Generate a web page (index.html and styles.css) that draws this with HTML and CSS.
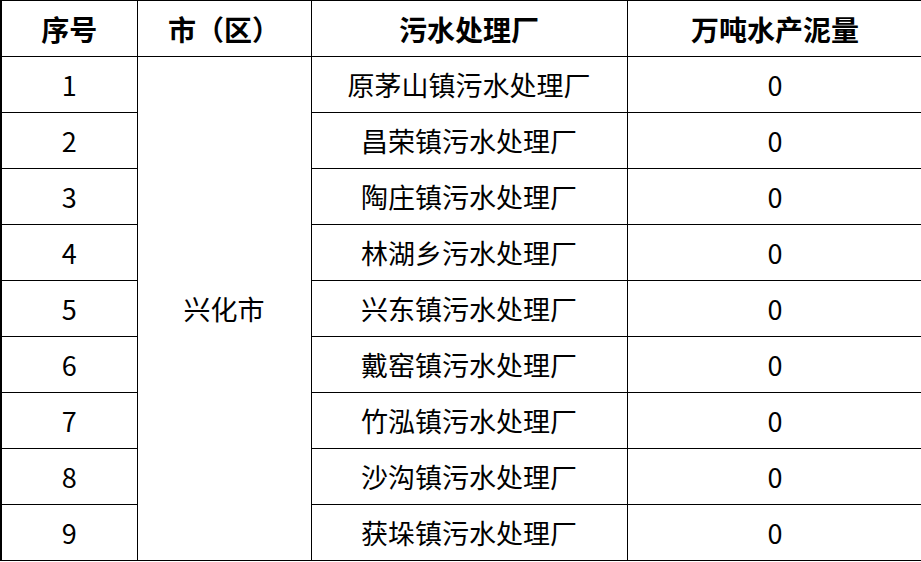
FILE: index.html
```html
<!DOCTYPE html>
<html lang="zh-CN">
<head>
<meta charset="utf-8">
<link rel="stylesheet" href="styles.css">
</head>
<body>
<table class="sludge">
  <colgroup>
    <col class="c1"><col class="c2"><col class="c3"><col class="c4">
  </colgroup>
  <thead>
    <tr><th>序号</th><th>市（区）</th><th>污水处理厂</th><th>万吨水产泥量</th></tr>
  </thead>
  <tbody>
    <tr><td>1</td><td rowspan="9">兴化市</td><td>原茅山镇污水处理厂</td><td>0</td></tr>
    <tr><td>2</td><td>昌荣镇污水处理厂</td><td>0</td></tr>
    <tr><td>3</td><td>陶庄镇污水处理厂</td><td>0</td></tr>
    <tr><td>4</td><td>林湖乡污水处理厂</td><td>0</td></tr>
    <tr><td>5</td><td>兴东镇污水处理厂</td><td>0</td></tr>
    <tr><td>6</td><td>戴窑镇污水处理厂</td><td>0</td></tr>
    <tr><td>7</td><td>竹泓镇污水处理厂</td><td>0</td></tr>
    <tr><td>8</td><td>沙沟镇污水处理厂</td><td>0</td></tr>
    <tr><td>9</td><td>获垛镇污水处理厂</td><td>0</td></tr>
  </tbody>
</table>
</body>
</html>
```

FILE: styles.css
```css
html, body {
  margin: 0;
  padding: 0;
  background: #ffffff;
}
body {
  font-family: "Noto Sans CJK SC", "Noto Sans", sans-serif;
  color: #000000;
}
.sludge {
  border-collapse: collapse;
  table-layout: fixed;
  width: 922px;
  border: 1px solid #000000;
  border-left-width: 2px;
}
.c1 { width: 136px; }
.c2 { width: 174px; }
.c3 { width: 316px; }
.c4 { width: 296px; }
.sludge th,
.sludge td {
  border: 1px solid #000000;
  height: 56px;
  padding: 0;
  box-sizing: border-box;
  text-align: center;
  vertical-align: middle;
  font-size: 27px;
  line-height: 1;
}
.sludge th {
  font-weight: 700;
  font-size: 28px;
}
```
